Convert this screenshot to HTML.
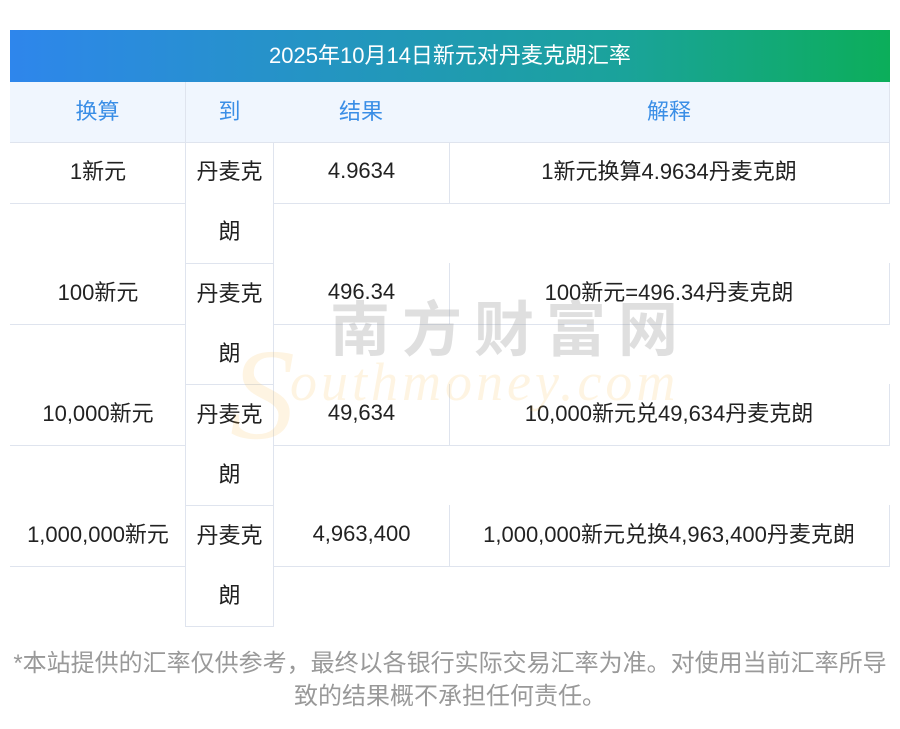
<!DOCTYPE html>
<html><head><meta charset="utf-8"><style>
body{margin:0;width:900px;height:729px;background:#fff;font-family:"Liberation Sans","Noto Sans CJK SC",sans-serif;position:relative;overflow:hidden}
.a{position:absolute;box-sizing:border-box;display:flex;align-items:center;justify-content:center;font-size:22px;color:#222;white-space:nowrap;padding-bottom:5px}
.title{left:10px;top:30px;width:880px;height:52px;background:linear-gradient(90deg,#2e86ec,#1aa39a 70%,#0cae5a);color:#fff;font-size:22px}
.h{top:82px;height:61px;background:#f0f6fe;color:#3a8ee6;border-right:1px solid #dfe4ee;border-bottom:1px solid #dfe4ee}
.c1{left:10px;width:176px;border-bottom:1px solid #dfe4ee}
.c2{left:185px;width:89px;border:1px solid #dfe4ee;border-top:none;flex-direction:column;justify-content:flex-start;line-height:60px;padding-bottom:0}
.c3{left:273px;width:177px;border-left:1px solid #dfe4ee;border-right:1px solid #dfe4ee;border-bottom:1px solid #dfe4ee;padding-bottom:3px}
.c4{left:449px;width:441px;border-right:1px solid #dfe4ee;border-bottom:1px solid #dfe4ee}
</style></head><body>
<div class="a title">2025年10月14日新元对丹麦克朗汇率</div>
<div class="a h" style="left:10px;width:176px">换算</div>
<div class="a h" style="left:185px;width:89px;border-left:1px solid #dfe4ee">到</div>
<div class="a h" style="left:273px;width:177px">结果</div>
<div class="a h" style="left:449px;width:441px">解释</div>

<div class="a c1" style="top:142px;height:62px">1新元</div>
<div class="a c2" style="top:142px;height:122px"><div>丹麦克</div><div>朗</div></div>
<div class="a c3" style="top:142px;height:62px">4.9634</div>
<div class="a c4" style="top:142px;height:62px">1新元换算4.9634丹麦克朗</div>

<div class="a c1" style="top:263px;height:62px">100新元</div>
<div class="a c2" style="top:263px;height:122px;border-top:1px solid #dfe4ee"><div>丹麦克</div><div>朗</div></div>
<div class="a c3" style="top:263px;height:62px">496.34</div>
<div class="a c4" style="top:263px;height:62px">100新元=496.34丹麦克朗</div>

<div class="a c1" style="top:384px;height:62px">10,000新元</div>
<div class="a c2" style="top:384px;height:122px;border-top:1px solid #dfe4ee"><div>丹麦克</div><div>朗</div></div>
<div class="a c3" style="top:384px;height:62px">49,634</div>
<div class="a c4" style="top:384px;height:62px">10,000新元兑49,634丹麦克朗</div>

<div class="a c1" style="top:505px;height:62px">1,000,000新元</div>
<div class="a c2" style="top:505px;height:122px;border-top:1px solid #dfe4ee"><div>丹麦克</div><div>朗</div></div>
<div class="a c3" style="top:505px;height:62px">4,963,400</div>
<div class="a c4" style="top:505px;height:62px">1,000,000新元兑换4,963,400丹麦克朗</div>

<div style="position:absolute;left:330px;top:294px;font-size:60px;color:rgba(150,150,150,.3);letter-spacing:12px;font-family:'Noto Sans CJK SC',sans-serif;font-weight:bold;line-height:64px">南方财富网</div>
<div style="position:absolute;left:230px;top:330px;font-size:130px;color:rgba(250,180,60,.15);font-family:'Liberation Serif',serif;font-style:italic;line-height:130px">S</div>
<div style="position:absolute;left:290px;top:352px;font-size:54px;color:rgba(250,180,60,.15);font-family:'Liberation Serif',serif;font-style:italic;letter-spacing:4px;line-height:60px">outhmoney.com</div>

<div style="position:absolute;left:0;top:647px;width:900px;text-align:center;font-size:24px;color:#999;line-height:33px;white-space:nowrap">*本站提供的汇率仅供参考，最终以各银行实际交易汇率为准。对使用当前汇率所导<br>致的结果概不承担任何责任。</div>
</body></html>
